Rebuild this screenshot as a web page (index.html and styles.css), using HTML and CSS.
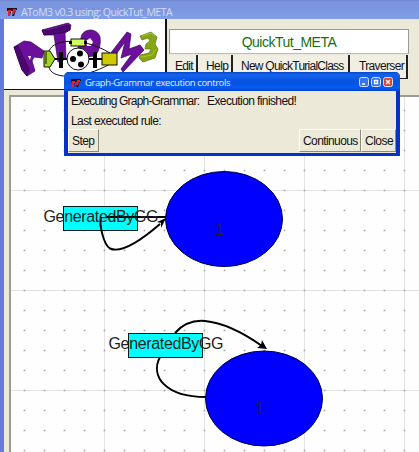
FILE: index.html
```html
<!DOCTYPE html>
<html lang="en">
<head>
<meta charset="utf-8">
<title>AToM3 v0.3 using: QuickTut_META</title>
<link rel="stylesheet" href="styles.css">
</head>
<body>
<div class="window">
  <header class="titlebar">
    <svg class="tk" viewBox="0 0 10 8"><path fill="#201018" d="M0 0h10v2H9L7 8H5l2-5H4L3 8H1l1-5H0z"/><path fill="#e02038" d="M1 2h3v2H3v4H1V4zM6 1h3v2H8L7 6H5z"/></svg>
    <span class="title">AToM3 v0.3 using: QuickTut_META</span>
  </header>
  <div class="content">
    <div class="top">
      <div class="logo">
        <svg width="161" height="70" viewBox="4 19 161 70">
          <g stroke="#35054f" stroke-width=".7" fill="#6b0f9c">
            <path d="M14 47L24 41L31 42L44 51L42 58L34 57L32 61L35 71L27 76L22 70L17 56Z"/>
            <path fill="#4b0871" d="M14 47L18 46L29 69L27 76L22 70Z"/>
            <path fill="#fff" stroke="none" d="M28 56L31 56L30 60Z"/>
            <path d="M42 30L68 23L71 25L70 30L65 33L66 59L58 62L54 35L44 35Z"/>
            <path fill="#4b0871" d="M42 30L48 31L69 25L70 30L62 33L44 35Z"/>
            <path d="M81 38C82 28 97 27 100 37C101 45 99 51 95 56L84 57L78 48Z"/>
            <path fill="#fff" stroke="none" d="M86 41L90 38L93 42L91 46L87 46Z"/>
            <path d="M110 54L127 32L131 34L129 49L140 45L144 50L123 72L121 69L132 54L121 58L125 42L114 57Z"/>
          </g>
          <path fill="#86a514" stroke="#5d7511" stroke-width=".7" d="M140 36L151 32L157 37L155 44L158 49L155 58L143 62L139 58L140 55L149 53L151 49L145 49L146 44L150 41L148 38L142 40Z"/>
          <path d="M142 36L151 33L155 36M141 57L152 55L156 49" fill="none" stroke="#adc52f"/>
          <path d="M49 53C49 40 80 35 110 53M49 66C49 79 80 81 110 64" fill="none" stroke="#111"/>
          <path d="M53 59h53" stroke="#000" stroke-width="2"/>
          <rect x="71" y="39" width="14" height="7" fill="#d0ff58" stroke="#111"/>
          <path d="M69 41h3v3h-3zM84 41h3v3h-3z"/>
          <path d="M44 51h6l5 8-5 8h-6z" fill="#a3d622" stroke="#111"/><path d="M46 52v12" stroke="#111"/>
          <path d="M59 52h4v16h-4zM93 52h4v16h-4z"/>
          <rect x="102" y="53" width="15" height="12" fill="#cfc900" stroke="#111"/>
          <circle cx="78" cy="59" r="11" fill="#fff" stroke="#111"/>
          <circle cx="80" cy="53.5" r="3"/><circle cx="73" cy="59" r="3"/><circle cx="81" cy="64.5" r="3"/>
        </svg>
      </div>
      <div class="tools">
        <div class="model">QuickTut_META</div>
        <div class="menu">
          <span class="edit">Edit</span><span class="help">Help</span><span class="newclass">New QuickTurialClass</span><span class="trav">Traverser</span>
        </div>
      </div>
    </div>
    <main class="canvas">
      <svg width="408" height="355" viewBox="11 97 408 355">
        <defs>
          <pattern id="dots" x="14" y="100" width="20" height="20" patternUnits="userSpaceOnUse"><rect x="9.700" y="9.700" width="1.600" height="1.600" fill="#a6a6a6"/></pattern>
          <pattern id="lines" x="4" y="90" width="100" height="100" patternUnits="userSpaceOnUse"><path d="M.5 0V100M0 .5H100" stroke="#e3e3e3"/></pattern>
        </defs>
        <rect x="11" y="97" width="408" height="355" fill="url(#lines)"/>
        <rect x="11" y="97" width="408" height="355" fill="url(#dots)"/>
        <ellipse cx="224" cy="219" rx="58.500" ry="47.500" fill="#0000fe" stroke="#000040"/>
        <rect x="63.500" y="206.500" width="74" height="24" fill="#00ffff" stroke="#002020"/>
        <path d="M166 217H106M101 217.500C99 223 103 244 110 248.500C122 254 145 237 160 224" fill="none" stroke="#000" stroke-width="2"/>
        <path d="M166 218L157 222L161 223L161 228Z"/>
        <text x="43.500" y="222" textLength="115">GeneratedByGG</text>
        <text x="215" y="235">1</text>
        <ellipse cx="264" cy="398.500" rx="58.500" ry="47.500" fill="#0000fe" stroke="#000040"/>
        <path d="M175 333C183 324 193 320 205 321C226 323 245 334 262 346M160 357C150 376 165 397 206 397" fill="none" stroke="#000" stroke-width="2"/>
        <path d="M267 349L257 348L261 345L262 340Z"/>
        <rect x="128.500" y="333.500" width="74" height="24" fill="#00ffff" stroke="#002020"/>
        <text x="108.500" y="349" textLength="115">GeneratedByGG</text>
        <text x="255" y="414">1</text>
      </svg>
    </main>
  </div>
</div>
<section class="dialog">
  <header class="dlg-title">
    <svg class="tk" viewBox="0 0 10 8"><path fill="#201018" d="M0 0h10v2H9L7 8H5l2-5H4L3 8H1l1-5H0z"/><path fill="#e02038" d="M1 2h3v2H3v4H1V4zM6 1h3v2H8L7 6H5z"/></svg>
    <span class="dlg-name">Graph-Grammar execution controls</span>
    <svg class="controls" width="35" height="11" viewBox="0 0 35 11">
      <g stroke="#d5e3ff"><rect x=".5" y=".5" width="9" height="9" rx="2" fill="#3974ea"/><rect x="12.500" y=".5" width="9" height="9" rx="2" fill="#3974ea"/><rect x="24.500" y=".5" width="9" height="9" rx="2" fill="#d8452a"/></g>
      <path d="M3 7h3M15.500 3.500h3v3h-3zM27 3l4 4M31 3l-4 4" fill="none" stroke="#fff" stroke-width="1.300"/>
    </svg>
  </header>
  <div class="dlg-body">
    <div class="row status"><span class="label">Executing Graph-Grammar:</span><span class="finished">Execution finished!</span></div>
    <div class="row rule"><span class="last">Last executed rule:</span></div>
    <div class="actions"><span class="btn step">Step</span><span class="btn cont">Continuous</span><span class="btn close">Close</span></div>
  </div>
</section>
</body>
</html>
```
FILE: styles.css
```css
* { box-sizing: border-box; }
body { margin: 0; width: 419px; height: 452px; overflow: hidden; position: relative; font-family: "Liberation Sans", Arial, sans-serif; font-size: 12px; color: #111; background: #ece9d8; }
.window { display: flex; flex-direction: column; height: 452px; }
.titlebar { height: 19px; flex: none; display: flex; align-items: center; padding: 4px 0 0 7px; background: linear-gradient(#7089d2 0, #7b96df 2px, #7b94df 8px, #7f9ce6 15px, #809ee8); }
.tk { width: 10px; height: 8px; flex: none; }
.title { margin-left: 4px; color: #d5dff8; font-family: "Open Sans", sans-serif; font-size: 10.500px; line-height: 14px; white-space: nowrap; letter-spacing: -.53px; }
.content { flex: 1; display: flex; flex-direction: column; border-left: 4px solid #667bd7; min-height: 0; }
.top { display: flex; height: 76px; flex: none; }
.logo { width: 163px; height: 71px; background: #fff; border-right: 2px solid #111; border-bottom: 1px solid #111; }
.logo svg { display: block; }
.tools { margin-left: 2px; padding-top: 10px; width: 240px; }
.model { height: 25px; border: 1px solid #999; border-bottom-color: #bbb; background: #fff; color: #147014; font-size: 14px; line-height: 25px; text-align: center; letter-spacing: -.5px; }
.menu { display: flex; height: 24px; margin-top: 1px; background: #f1efe4; }
.menu span { border-right: 2px solid #222; border-bottom: 1px solid #222; line-height: 22px; white-space: nowrap; padding-left: 6px; }
.menu .edit { width: 29px; letter-spacing: -.7px; }
.menu .help { width: 35px; padding-left: 8px; letter-spacing: -.6px; }
.menu .newclass { width: 117px; padding-left: 8px; letter-spacing: -.75px; }
.menu .trav { width: 58px; padding-left: 9px; letter-spacing: -.65px; }
.canvas { flex: 1; margin-left: 5px; border-left: 2px solid #9b9b94; border-top: 2px solid #9b9b94; background: #fefefe; overflow: hidden; }
.canvas svg { display: block; }
.canvas text { font-family: "Liberation Sans", Arial, sans-serif; font-size: 16px; fill: #222; }
.dialog { position: absolute; left: 64px; top: 72px; width: 336px; height: 84px; border: solid #0831c9; border-width: 0 4px 3px; border-radius: 5px 5px 0 0; background: #0831c9; }
.dlg-title { height: 19px; margin: 0 -4px; padding: 2px 6px 0 7px; display: flex; align-items: center; border-radius: 5px 5px 0 0; background: linear-gradient(#0846c8, #1464ee 3px, #0753df 9px, #055cf1 16px, #0441cc); }
.dlg-name { margin-left: 4px; color: #e5efff; font-family: "Open Sans", sans-serif; font-size: 9.500px; line-height: 14px; white-space: nowrap; letter-spacing: -.4px; }
.controls { margin-left: auto; }
.dlg-body { height: 62px; background: #ece9d8; display: flex; flex-direction: column; }
.row { height: 19px; display: flex; align-items: center; padding-left: 3px; white-space: nowrap; }
.rule { height: 20px; padding-top: 1px; margin-bottom: -1px; }
.label { width: 136px; letter-spacing: -.8px; }
.finished { letter-spacing: -.6px; }
.last { letter-spacing: -.6px; }
.actions { height: 24px; display: flex; }
.btn { height: 23px; line-height: 22px; border: 1px solid; border-color: #fff #8d8a7d #8d8a7d #fff; padding-left: 3px; }
.step { width: 31px; letter-spacing: -.6px; }
.cont { width: 62px; margin-left: auto; letter-spacing: -.6px; }
.close { width: 35px; letter-spacing: -.5px; }
```
